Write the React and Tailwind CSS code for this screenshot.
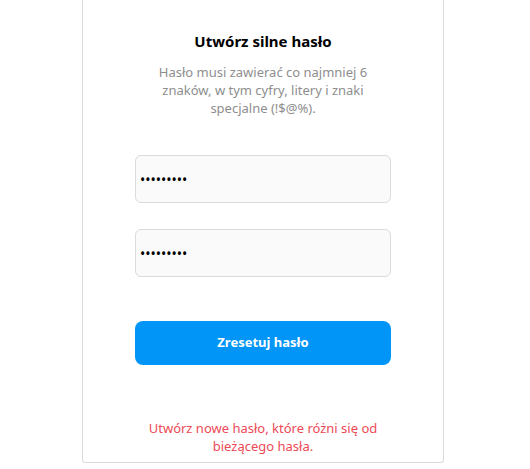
import React from 'react';

const App = () => {
  return (
    <div
      className="min-h-screen bg-white pl-[82px]"
      style={{ fontFamily: '"Segoe UI", "Noto Sans", sans-serif' }}
    >
      <div className="w-[362px] border-x border-b border-[#dbdbdb] rounded-b-[3px] px-[52px] pt-[29px] pb-[7px] flex flex-col items-center">
        <h1 className="text-[15px] leading-6 font-bold text-black">Utwórz silne hasło</h1>
        <p className="mt-[10px] text-[13px] leading-[18px] text-[#8e8e8e] text-center px-2">
          Hasło musi zawierać co najmniej 6 znaków, w tym cyfry, litery i znaki specjalne (!$@%).
        </p>

        <input
          type="password"
          defaultValue="123456789"
          className="mt-[38px] w-full h-[48px] rounded-[6px] border border-[#dbdbdb] bg-[#fafafa] px-[4px] text-sm text-black outline-none"
        />
        <input
          type="password"
          defaultValue="123456789"
          className="mt-[26px] w-full h-[48px] rounded-[6px] border border-[#dbdbdb] bg-[#fafafa] px-[4px] text-sm text-black outline-none"
        />

        <button className="mt-[44px] w-full h-[44px] rounded-[8px] bg-[#0095f6] text-white text-[13px] font-bold">
          Zresetuj hasło
        </button>

        <p className="mt-[54px] text-[13px] leading-[18px] text-[#ed4956] text-center">
          Utwórz nowe hasło, które różni się od bieżącego hasła.
        </p>
      </div>
    </div>
  );
};

export default App;
